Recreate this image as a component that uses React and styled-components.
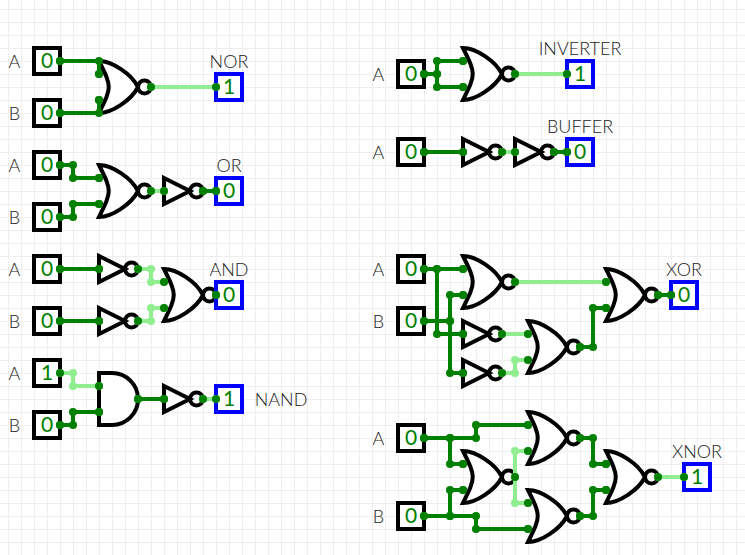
import React from "react";
import styled, { createGlobalStyle } from "styled-components";

/* The sheet is a square grid; every part sits on a (column, row) crossing. */
const CELL = 13;
const ORIGIN_X = 8;
const ORIGIN_Y = 9;
const px = (col) => ORIGIN_X + col * CELL;
const py = (row) => ORIGIN_Y + row * CELL;

const LOW = "#008000";
const HIGH = "#90ee90";

const GlobalStyle = createGlobalStyle`
  body {
    margin: 0;
    background: #ffffff;
  }
`;

const Sheet = styled.main`
  position: relative;
  min-height: 100vh;
  overflow: hidden;
  background-color: #ffffff;
  background-image: linear-gradient(to right, #eeeeee 1px, transparent 1px),
    linear-gradient(to bottom, #eeeeee 1px, transparent 1px);
  background-size: ${CELL}px ${CELL}px;
  background-position: ${ORIGIN_X}px ${ORIGIN_Y}px;
`;

const Layer = styled.svg`
  position: absolute;
  inset: 0;
  width: 100%;
  height: 100%;
  overflow: visible;
  pointer-events: none;
`;

const GatePath = styled.path`
  fill: #ffffff;
  stroke: #000000;
  stroke-width: 4;
`;

const WirePath = styled.path`
  fill: none;
  stroke: ${(p) => p.$color};
  stroke-width: 4;
`;

const Pin = styled.button`
  position: absolute;
  left: ${(p) => px(p.$col)}px;
  top: ${(p) => py(p.$row)}px;
  transform: translate(-50%, -50%);
  box-sizing: border-box;
  display: flex;
  align-items: center;
  justify-content: center;
  width: 30px;
  height: 30px;
  padding: 0 0 2px;
  border: 4px solid #000000;
  border-radius: 0;
  background: #ffffff;
  color: ${LOW};
  font: 400 21px/20px Lato, sans-serif;
`;

const OutputPin = styled(Pin)`
  border-color: #0000ff;
`;

const Label = styled.label`
  position: absolute;
  left: ${(p) => px(p.$col)}px;
  top: ${(p) => py(p.$row)}px;
  transform: translate(-50%, -50%);
  color: #222222;
  font: 300 18px/20px Lato, sans-serif;
  white-space: nowrap;
`;

const inputs = [
  { id: "nor-a", name: "A", col: 3, row: 4, value: 0 },
  { id: "nor-b", name: "B", col: 3, row: 8, value: 0 },
  { id: "or-a", name: "A", col: 3, row: 12, value: 0 },
  { id: "or-b", name: "B", col: 3, row: 16, value: 0 },
  { id: "and-a", name: "A", col: 3, row: 20, value: 0 },
  { id: "and-b", name: "B", col: 3, row: 24, value: 0 },
  { id: "nand-a", name: "A", col: 3, row: 28, value: 1 },
  { id: "nand-b", name: "B", col: 3, row: 32, value: 0 },
  { id: "inv-a", name: "A", col: 31, row: 5, value: 0 },
  { id: "buf-a", name: "A", col: 31, row: 11, value: 0 },
  { id: "xor-a", name: "A", col: 31, row: 20, value: 0 },
  { id: "xor-b", name: "B", col: 31, row: 24, value: 0 },
  { id: "xnor-a", name: "A", col: 31, row: 33, value: 0 },
  { id: "xnor-b", name: "B", col: 31, row: 39, value: 0 },
];

const outputs = [
  { id: "nor", name: "NOR", col: 17, row: 6, value: 1 },
  { id: "or", name: "OR", col: 17, row: 14, value: 0 },
  { id: "and", name: "AND", col: 17, row: 22, value: 0 },
  { id: "nand", name: "NAND", col: 17, row: 30, value: 1, side: true },
  { id: "inv", name: "INVERTER", col: 44, row: 5, value: 1 },
  { id: "buf", name: "BUFFER", col: 44, row: 11, value: 0 },
  { id: "xor", name: "XOR", col: 52, row: 22, value: 0 },
  { id: "xnor", name: "XNOR", col: 53, row: 36, value: 1 },
];

/* Gate outlines are drawn round their centre; `ends` are terminals in cells. */
const shapes = {
  nor: {
    d: "M-13-26C0-26 19.5-13 26 0C19.5 13 0 26-13 26C0 0 0 0-13-26ZM39 0A6.5 6.5 0 1 1 26 0A6.5 6.5 0 1 1 39 0Z",
    ends: [[-1, -1], [-1, 1], [3, 0]],
  },
  not: {
    d: "M-13-13L13 0L-13 13ZM26 0A6.5 6.5 0 1 1 13 0A6.5 6.5 0 1 1 26 0Z",
    ends: [[-1, 0], [2, 0]],
  },
  and: {
    d: "M-13-26H0A26 26 0 0 1 0 26H-13Z",
    ends: [[-1, -1], [-1, 1], [2, 0]],
  },
};

const gates = [
  ["nor", 8, 6],
  ["nor", 8, 14],
  ["not", 13, 14],
  ["not", 8, 20],
  ["not", 8, 24],
  ["nor", 13, 22],
  ["and", 8, 30],
  ["not", 13, 30],
  ["nor", 36, 5],
  ["not", 36, 11],
  ["not", 40, 11],
  ["nor", 36, 21],
  ["not", 36, 25],
  ["not", 36, 28],
  ["nor", 41, 26],
  ["nor", 47, 22],
  ["nor", 36, 36],
  ["nor", 41, 33],
  ["nor", 41, 39],
  ["nor", 47, 36],
];

const highWires = [
  [[11, 6], [16, 6]],
  [[11, 14], [12, 14]],
  [[10, 20], [11, 20], [11, 21], [12, 21]],
  [[10, 24], [11, 24], [11, 23], [12, 23]],
  [[4, 28], [5, 28], [5, 29], [7, 29]],
  [[15, 30], [16, 30]],
  [[39, 5], [43, 5]],
  [[38, 11], [39, 11]],
  [[39, 21], [46, 21]],
  [[38, 25], [40, 25]],
  [[38, 28], [39, 28], [39, 27], [40, 27]],
  [[40, 34], [39, 34], [39, 36], [39, 38], [40, 38]],
  [[50, 36], [52, 36]],
];

const lowWires = [
  [[4, 4], [7, 4], [7, 5]],
  [[4, 8], [7, 8], [7, 7]],
  [[4, 12], [5, 12], [5, 13], [7, 13]],
  [[4, 16], [5, 16], [5, 15], [7, 15]],
  [[15, 14], [16, 14]],
  [[4, 20], [7, 20]],
  [[4, 24], [7, 24]],
  [[4, 32], [5, 32], [5, 31], [7, 31]],
  [[10, 30], [12, 30]],
  [[32, 5], [33, 5]],
  [[35, 4], [33, 4], [33, 6], [35, 6]],
  [[32, 11], [35, 11]],
  [[42, 11], [43, 11]],
  [[32, 20], [33, 20], [35, 20]],
  [[33, 20], [33, 25], [35, 25]],
  [[32, 24], [34, 24]],
  [[35, 22], [34, 22], [34, 28], [35, 28]],
  [[44, 26], [45, 26], [45, 23], [46, 23]],
  [[50, 22], [51, 22]],
  [[32, 33], [34, 33], [36, 33], [36, 32], [40, 32]],
  [[34, 33], [34, 35], [35, 35]],
  [[32, 39], [34, 39], [36, 39], [36, 40], [40, 40]],
  [[34, 39], [34, 37], [35, 37]],
  [[44, 33], [45, 33], [45, 35], [46, 35]],
  [[44, 39], [45, 39], [45, 37], [46, 37]],
];

const terminals = [
  ...gates.flatMap(([kind, col, row]) =>
    shapes[kind].ends.map(([dc, dr]) => [col + dc, row + dr])
  ),
  ...inputs.map((pin) => [pin.col + 1, pin.row]),
  ...outputs.map((pin) => [pin.col - 1, pin.row]),
];

const linePath = (points) =>
  "M" + points.map(([c, r]) => `${px(c)} ${py(r)}`).join("L");

function Dots({ points, color }) {
  return points.map(([c, r], i) => (
    <circle key={i} cx={px(c)} cy={py(r)} r="4" fill={color} />
  ));
}

function Wires({ wires, color }) {
  return wires.map((points, i) => (
    <g key={i}>
      <WirePath $color={color} d={linePath(points)} />
      <Dots points={points} color={color} />
    </g>
  ));
}

export default function App() {
  return (
    <>
      <GlobalStyle />
      <Sheet>
        <Layer aria-hidden="true">
          {gates.map(([kind, col, row]) => (
            <GatePath
              key={`${col}-${row}`}
              d={shapes[kind].d}
              transform={`translate(${px(col)} ${py(row)})`}
            />
          ))}
        </Layer>

        {inputs.map((pin) => (
          <React.Fragment key={pin.id}>
            <Label htmlFor={pin.id} $col={pin.col - 2.5} $row={pin.row}>
              {pin.name}
            </Label>
            <Pin type="button" id={pin.id} $col={pin.col} $row={pin.row}>
              {pin.value}
            </Pin>
          </React.Fragment>
        ))}

        {outputs.map((pin) => (
          <React.Fragment key={pin.id}>
            <Label
              htmlFor={pin.id}
              $col={pin.side ? pin.col + 4 : pin.col}
              $row={pin.side ? pin.row : pin.row - 2}
            >
              {pin.name}
            </Label>
            <OutputPin as="output" id={pin.id} $col={pin.col} $row={pin.row}>
              {pin.value}
            </OutputPin>
          </React.Fragment>
        ))}

        <Layer aria-hidden="true">
          <Wires wires={highWires} color={HIGH} />
          <Wires wires={lowWires} color={LOW} />
          <Dots points={terminals} color={LOW} />
          <Dots points={[[33, 5], [34, 24]]} color={LOW} />
        </Layer>
      </Sheet>
    </>
  );
}
